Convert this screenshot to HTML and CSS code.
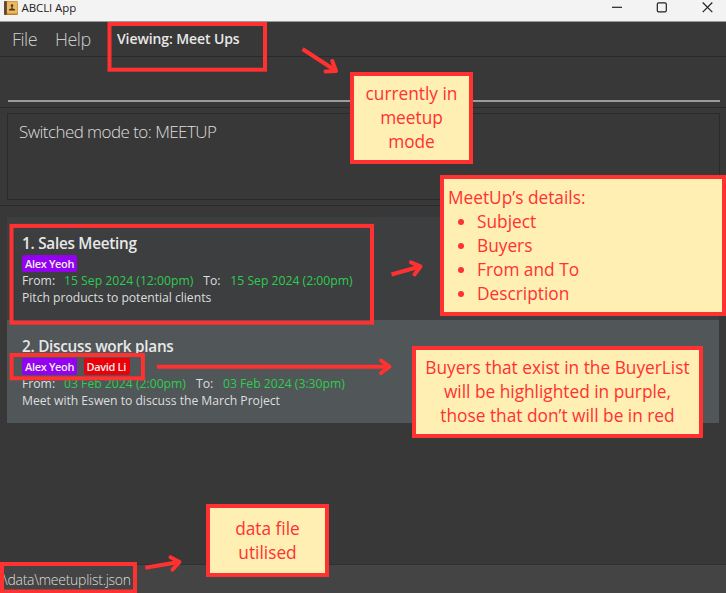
FILE: index.html
```html
<!DOCTYPE html>
<html lang="en">
<head>
<meta charset="utf-8">
<title>ABCLI App</title>
<link rel="stylesheet" href="styles.css">
</head>
<body>
<div class="window">
  <header class="titlebar">
    <svg class="app-icon" width="14" height="14" viewBox="0 0 14 14">
      <rect x="0" y="0" width="14" height="14" rx="1.5" fill="#b97f36"/>
      <rect x="3" y="0.5" width="10.5" height="12" rx="1" fill="#edb95f"/>
      <rect x="0" y="0" width="2.8" height="14" rx="1" fill="#63472f"/>
      <circle cx="8" cy="4.500" r="1.300" fill="#4b3928"/>
      <path d="M7.400 5h1.200v2.400l2.400 0.900v1.200H5V8.300l2.400-0.900z" fill="#4b3928"/>
    </svg>
    <span class="app-name">ABCLI App</span>
    <svg class="controls" width="104" height="16" viewBox="0 0 104 16" fill="none" stroke="#222" stroke-width="1.2">
      <path d="M1 7.300h10"/>
      <rect x="46.300" y="2.800" width="9" height="9" rx="1.300"/>
      <path d="M91.700 2.500l9.600 9.600M101.300 2.500l-9.600 9.600" stroke-width="1.200"/>
    </svg>
  </header>
  <nav class="menubar">
    <span class="menu file">File</span>
    <span class="menu help">Help</span>
    <span class="mode">Viewing: Meet Ups</span>
  </nav>
  <section class="command"><div class="command-field"></div></section>
  <section class="result"><div class="result-box"><span class="result-text">Switched mode to: MEETUP</span></div></section>
  <main class="list">
    <article class="card">
      <h2>1. Sales Meeting</h2>
      <div class="tags"><span class="tag known">Alex Yeoh</span></div>
      <div class="times"><span class="from">From:</span><span class="date">15 Sep 2024 (12:00pm)</span><span class="to">To:</span><span class="date">15 Sep 2024 (2:00pm)</span></div>
      <p>Pitch products to potential clients</p>
    </article>
    <article class="card alt">
      <h2>2. Discuss work plans</h2>
      <div class="tags"><span class="tag known">Alex Yeoh</span><span class="tag unknown">David Li</span></div>
      <div class="times"><span class="from">From:</span><span class="date">03 Feb 2024 (2:00pm)</span><span class="to">To:</span><span class="date">03 Feb 2024 (3:30pm)</span></div>
      <p>Meet with Eswen to discuss the March Project</p>
    </article>
  </main>
  <footer class="status"><span>\data\meetuplist.json</span></footer>

  <svg class="marks" width="726" height="593" viewBox="0 0 726 593" fill="none" stroke="#ff3131" stroke-width="4">
    <rect x="109.500" y="24" width="155.500" height="45.700"/>
    <rect x="11.500" y="225.900" width="360.500" height="96.800"/>
    <rect x="11.600" y="355" width="131.300" height="23.300"/>
    <rect x="2" y="564" width="133" height="27.500"/>
    <path d="M302.500 49L335.500 70.500"/>
    <path d="M332.300 61L336 71L325.500 71.500" stroke-linecap="round" stroke-linejoin="round"/>
    <path d="M391.500 274.500L420 266.500"/>
    <path d="M411 262.300L420.500 266.300L414.500 274.500" stroke-linecap="round" stroke-linejoin="round"/>
    <path d="M157 366.700H389"/>
    <path d="M381 360.500L389.500 366.700L381 373" stroke-linecap="round" stroke-linejoin="round"/>
    <path d="M145.300 567.700L179 562"/>
    <path d="M170.500 557.300L179.500 562L172.500 569.700" stroke-linecap="round" stroke-linejoin="round"/>
  </svg>
  <aside class="note n-mode">currently in<br>meetup<br>mode</aside>
  <aside class="note n-details">MeetUp’s details:
    <ul><li>Subject</li><li>Buyers</li><li>From and To</li><li>Description</li></ul>
  </aside>
  <aside class="note n-buyers">Buyers that exist in the BuyerList<br>will be highlighted in purple,<br>those that don’t will be in red</aside>
  <aside class="note n-file">data file<br>utilised</aside>
</div>
</body>
</html>
```
FILE: styles.css
```css
* { box-sizing: border-box; }
body { margin: 0; overflow: hidden; font-family: "Open Sans", "Noto Sans", sans-serif; }
.window { position: relative; width: 726px; height: 593px; display: flex; flex-direction: column; background: #383838; color: #dedede; white-space: nowrap; }
.titlebar { height: 22px; flex: none; display: flex; background: #f3f3f3; border-bottom: 1px solid #999; color: #222; }
.app-icon { margin: 1px 0 0 4px; }
.app-name { margin-left: 3.5px; font-size: 11.5px; letter-spacing: -0.1px; line-height: 16px; }
.controls { margin-left: auto; margin-right: 11px; }
.menubar { height: 35px; flex: none; display: flex; border-bottom: 1px solid #2a2a2a; line-height: 34px; padding-left: 12px; }
.menu { font-size: 18px; letter-spacing: -0.5px; font-weight: 300; color: #ccc; }
.file { width: 43px; }
.help { width: 62px; }
.mode { font-size: 14px; letter-spacing: -0.1px; font-weight: 600; color: #e8e8e8; }
.command { height: 51px; flex: none; padding: 0 6px 5px 8px; border-bottom: 1px solid #2a2a2a; }
.command-field { height: 45px; border-bottom: 2px solid #9b9b9b; }
.result { height: 98px; flex: none; padding: 5px 6px 6px 7px; border-bottom: 1px solid #2a2a2a; }
.result-box { height: 87px; border: 1px solid #2a2a2a; padding: 6px 11px; font-size: 17px; letter-spacing: -0.55px; line-height: 24px; font-weight: 300; }
.list { flex: 1; padding: 11px 7px 0; }
.card { height: 103px; background: #3c3e3f; padding: 16px 15px 0; font-size: 12.2px; line-height: 17px; }
.card.alt { background: #515658; }
.card h2 { margin: 0; height: 19px; font-size: 15.3px; letter-spacing: -0.26px; line-height: 20px; font-weight: 600; color: #e8e8e8; }
.tags { display: flex; gap: 6.5px; height: 20px; padding-top: 3px; }
.tag { height: 17px; padding: 0 3px; border-radius: 2px; font-size: 11px; letter-spacing: -0.34px; line-height: 17px; font-weight: 600; color: #eee; }
.known { background: #9400f0; width: 55px; }
.unknown { background: #eb0009; width: 46px; }
.times { display: flex; }
.from { width: 42px; }
.to { width: 27px; margin-left: 10px; }
.date { color: #2ecc4f; }
.card p { margin: 0; letter-spacing: -0.03px; }
.status { height: 29px; flex: none; background: #444; border-top: 1px solid #303030; padding: 5px 3px; font-size: 14px; letter-spacing: -0.27px; line-height: 20px; font-weight: 300; }
.marks { position: absolute; left: 0; top: 0; }
.note { position: absolute; background: #ffefb3; border: 4px solid #ff3131; color: #ff3131; font-size: 17.3px; line-height: 24px; text-align: center; }
.n-mode { left: 350px; top: 72px; width: 123px; height: 92px; padding-top: 6px; }
.n-details { left: 440px; top: 175px; width: 286px; height: 141px; padding: 7px 4px; text-align: left; }
.n-details ul { margin: 0; padding-left: 29px; }
.n-buyers { left: 412px; top: 346px; width: 291px; height: 92px; padding-top: 6px; }
.n-file { left: 206px; top: 504px; width: 123px; height: 73px; padding-top: 9px; }
```
